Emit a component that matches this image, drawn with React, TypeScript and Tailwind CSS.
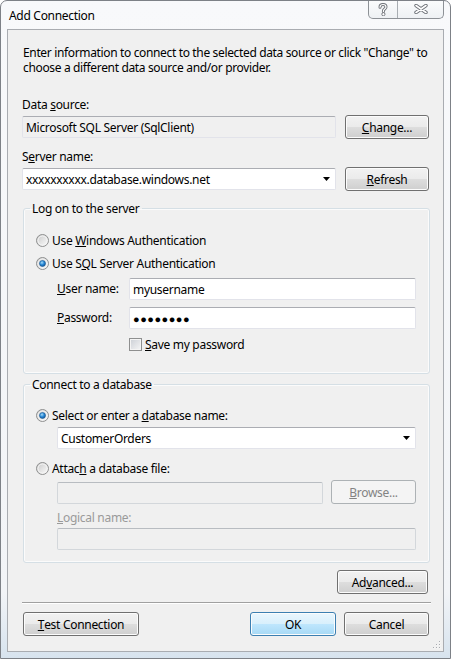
import React from 'react';

const btnBase =
  'h-[24px] rounded-[3px] border text-[12px] leading-[15px] flex items-center justify-center shadow-[inset_0_0_0_1px_#fcfcfc]';
const btnNormal =
  'border-[#707070] bg-[linear-gradient(to_bottom,#f2f2f2_0%,#ebebeb_48%,#dddddd_52%,#cfcfcf_100%)] text-black';
const btnDefault =
  'border-[#3c7fb1] bg-[linear-gradient(to_bottom,#eaf6fd_0%,#d9f0fc_48%,#bee6fd_52%,#a7d9f5_100%)] text-black';
const btnDisabled = 'border-[#adb2b5] bg-[#f4f4f4] text-[#838383] shadow-none';

const Button: React.FC<{ className?: string; kind?: 'normal' | 'default' | 'disabled'; children: React.ReactNode }> = ({
  className = '',
  kind = 'normal',
  children,
}) => {
  const look = kind === 'default' ? btnDefault : kind === 'disabled' ? btnDisabled : btnNormal;
  return <div className={`${btnBase} ${look} ${className}`}>{children}</div>;
};

const TextBox: React.FC<{ className?: string; disabled?: boolean; readOnly?: boolean; children?: React.ReactNode }> = ({
  className = '',
  disabled,
  readOnly,
  children,
}) => (
  <div
    className={`h-[22px] rounded-[2px] border flex items-center pl-[3px] leading-[15px] ${
      disabled
        ? 'bg-[#f0f0f0] border-[#d3d7db] border-t-[#b8bcc1]'
        : readOnly
        ? 'bg-[#f0f0f0] border-[#e2e3ea] border-t-[#abadb3]'
        : 'bg-white border-[#e2e3ea] border-t-[#abadb3]'
    } ${className}`}
  >
    {children}
  </div>
);

const Arrow = () => (
  <svg width="7" height="4" viewBox="0 0 7 4" className="ml-auto mr-[5px]">
    <path d="M0 0h7L3.5 4z" fill="#000" />
  </svg>
);

const Combo: React.FC<{ className?: string; children: React.ReactNode }> = ({ className = '', children }) => (
  <TextBox className={className}>
    <span>{children}</span>
    <Arrow />
  </TextBox>
);

const Radio: React.FC<{ checked?: boolean }> = ({ checked }) => (
  <svg width="13" height="13" viewBox="0 0 13 13" className="shrink-0">
    <defs>
      <linearGradient id="rg" x1="0" y1="0" x2="1" y2="1">
        <stop offset="0" stopColor="#c7c7c7" />
        <stop offset="1" stopColor="#ffffff" />
      </linearGradient>
      <radialGradient id="rd" cx="0.4" cy="0.35" r="0.7">
        <stop offset="0" stopColor="#a9dbf6" />
        <stop offset="0.5" stopColor="#2a8bd8" />
        <stop offset="1" stopColor="#0c4f92" />
      </radialGradient>
    </defs>
    <circle cx="6.5" cy="6.5" r="6" fill="url(#rg)" stroke="#8e8f8f" />
    <circle cx="6.5" cy="6.5" r="4.5" fill="none" stroke="#f4f4f4" strokeWidth="1" />
    {checked && <circle cx="6.5" cy="6.5" r="3" fill="url(#rd)" stroke="#1b5b95" strokeWidth="0.6" />}
  </svg>
);

const Checkbox = () => (
  <div className="w-[13px] h-[13px] border border-[#8e8f8f] bg-[linear-gradient(135deg,#cbcfd5,#f6f6f6)] shadow-[inset_0_0_0_1px_#f4f4f4] shrink-0" />
);

const CaptionButtons = () => (
  <div className="flex h-[19px] border border-t-0 border-[#8d9196] rounded-b-[5px] bg-[linear-gradient(to_bottom,#fbfcfd,#eef1f4)] mr-[6px] -mt-[1px]">
    <div className="w-[29px] flex items-center justify-center border-r border-[#a8adb2]">
      <svg width="10" height="13" viewBox="0 0 10 13">
        <path d="M2 4.2C2 2.4 3.3 1.5 5 1.5s3 1 3 2.6c0 1.8-2.6 2-2.6 3.8V8.5" fill="none" stroke="#6d7177" strokeWidth="3" strokeLinecap="round" />
        <path d="M2 4.2C2 2.4 3.3 1.5 5 1.5s3 1 3 2.6c0 1.8-2.6 2-2.6 3.8V8.5" fill="none" stroke="#ffffff" strokeWidth="1.2" strokeLinecap="round" />
        <circle cx="5.4" cy="11.2" r="1.6" fill="#ffffff" stroke="#6d7177" strokeWidth="0.9" />
      </svg>
    </div>
    <div className="w-[45px] flex items-center justify-center">
      <svg width="14" height="10" viewBox="0 0 14 10">
        <path d="M2 1.5l10 7M12 1.5l-10 7" fill="none" stroke="#6d7177" strokeWidth="3.4" strokeLinecap="round" />
        <path d="M2 1.5l10 7M12 1.5l-10 7" fill="none" stroke="#ffffff" strokeWidth="1.6" strokeLinecap="round" />
      </svg>
    </div>
  </div>
);

const Group: React.FC<{ legend: string; className?: string; children: React.ReactNode }> = ({ legend, className = '', children }) => (
  <fieldset className={`ml-[1px] w-[407px] border border-[#d5dfe5] rounded-[3px] shadow-[inset_0_0_0_1px_#fbfbfb] ${className}`}>
    <legend className="ml-[6px] px-[2px] leading-[15px]">{legend}</legend>
    {children}
  </fieldset>
);

const App: React.FC = () => {
  return (
    <div
      className="w-[451px] h-[659px] flex flex-col border border-[#7d8187] rounded-t-[7px] bg-[linear-gradient(to_bottom,#f8f9fb_0%,#f2f4f7_90%,#d7e3ee_100%)] text-[12px] tracking-[-0.3px] text-black overflow-hidden"
      style={{ fontFamily: '"Segoe UI", "Noto Sans", sans-serif' }}
    >
      {/* title bar */}
      <div className="h-[28px] shrink-0 flex items-start justify-between pl-[8px]">
        <span className="mt-[7px] leading-[15px]">Add Connection</span>
        <CaptionButtons />
      </div>

      {/* client area */}
      <div className="relative ml-[6px] w-[437px] h-[623px] border border-[#a9acb1] bg-[#f0f0f0] pl-[14px] pr-[14px] pt-[15px]">
        <p className="leading-[15px] ml-[1px] -mr-[10px] tracking-[-0.35px]">
          Enter information to connect to the selected data source or click "Change" to choose a different data source and/or provider.
        </p>

        <div className="mt-[22px] leading-[15px]">
          Data <u>s</u>ource:
        </div>
        <div className="mt-[3px] flex justify-between items-start">
          <TextBox readOnly className="w-[314px] mt-[1px]">
            Microsoft SQL Server (SqlClient)
          </TextBox>
          <Button className="w-[84px]">
            <u>C</u>hange...
          </Button>
        </div>

        <div className="mt-[10px] leading-[15px]">
          S<u>e</u>rver name:
        </div>
        <div className="mt-[3px] flex justify-between items-start">
          <Combo className="w-[314px] mt-[1px]">xxxxxxxxxx.database.windows.net</Combo>
          <Button className="w-[84px]">
            <u>R</u>efresh
          </Button>
        </div>

        <Group legend="Log on to the server" className="mt-[10px] h-[173px]">
          <div className="pl-[12px] pt-[17px]">
            <div className="flex items-center gap-[3px] leading-[15px]">
              <Radio />
              <span>
                Use <u>W</u>indows Authentication
              </span>
            </div>
            <div className="mt-[8px] flex items-center gap-[3px] leading-[15px]">
              <Radio checked />
              <span>
                Use S<u>Q</u>L Server Authentication
              </span>
            </div>
            <div className="pl-[21px]">
              <div className="mt-[7px] flex items-center">
                <span className="w-[72px]">
                  <u>U</u>ser name:
                </span>
                <TextBox className="w-[287px]">myusername</TextBox>
              </div>
              <div className="mt-[7px] flex items-center">
                <span className="w-[72px]">
                  <u>P</u>assword:
                </span>
                <TextBox className="w-[287px] tracking-[0.5px] text-[11px]">●●●●●●●●</TextBox>
              </div>
              <div className="mt-[8px] ml-[72px] flex items-center gap-[3px] leading-[15px]">
                <Checkbox />
                <span>
                  <u>S</u>ave my password
                </span>
              </div>
            </div>
          </div>
        </Group>

        <Group legend="Connect to a database" className="mt-[3px] h-[186px]">
          <div className="pl-[12px] pt-[16px]">
            <div className="flex items-center gap-[3px] leading-[15px]">
              <Radio checked />
              <span>
                Select or enter a <u>d</u>atabase name:
              </span>
            </div>
            <div className="pl-[21px]">
              <Combo className="mt-[4px] w-[359px]">CustomerOrders</Combo>
            </div>
            <div className="mt-[12px] flex items-center gap-[3px] leading-[15px]">
              <Radio />
              <span>
                Attac<u>h</u> a database file:
              </span>
            </div>
            <div className="pl-[21px]">
              <div className="mt-[4px] flex items-start justify-between w-[359px]">
                <TextBox disabled className="w-[266px] mt-[2px]" />
                <Button kind="disabled" className="w-[85px]">
                  <u>B</u>rowse...
                </Button>
              </div>
              <div className="mt-[6px] leading-[15px] text-[#9a9a9a]">
                <u>L</u>ogical name:
              </div>
              <TextBox disabled className="mt-[3px] w-[359px]" />
            </div>
          </div>
        </Group>

        <div className="mt-[7px] flex justify-end mr-[1px]">
          <Button className="w-[91px]">
            Ad<u>v</u>anced...
          </Button>
        </div>

        <div className="mt-[8px] h-[1px] -mr-[2px] bg-[#a0a0a0] shadow-[0_1px_0_#ffffff]" />

        <div className="mt-[9px] flex items-start">
          <Button className="ml-[1px] w-[116px]">
            <u>T</u>est Connection
          </Button>
          <Button kind="default" className="ml-auto w-[86px]">
            OK
          </Button>
          <Button className="ml-[8px] w-[85px]">Cancel</Button>
        </div>

        <svg width="9" height="9" viewBox="0 0 9 9" className="absolute right-[2px] bottom-[2px]">
          {[
            [7, 1],
            [4, 4],
            [7, 4],
            [1, 7],
            [4, 7],
            [7, 7],
          ].map(([x, y]) => (
            <g key={`${x}-${y}`}>
              <rect x={x + 0.5} y={y + 0.5} width="1" height="1" fill="#ffffff" />
              <rect x={x} y={y} width="1" height="1" fill="#a9acb1" />
            </g>
          ))}
        </svg>
      </div>
    </div>
  );
};

export default App;
